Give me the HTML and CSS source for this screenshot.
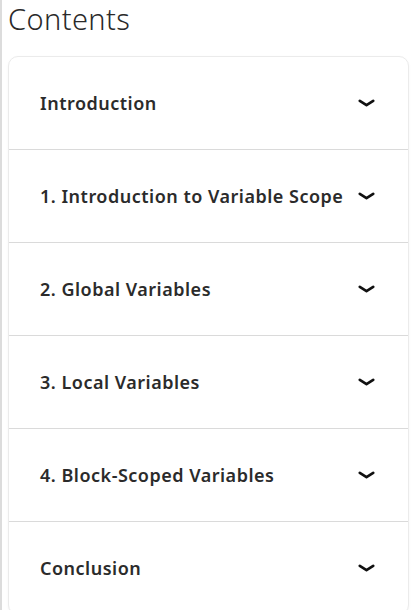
FILE: index.html
```html
<!DOCTYPE html>
<html lang="en">
<head>
<meta charset="utf-8">
<title>Contents</title>
<link rel="stylesheet" href="styles.css">
</head>
<body>
<div class="page">
  <h2 class="title">Contents</h2>
  <div class="toc">
    <div class="row"><span class="label">Introduction</span><svg class="chev" viewBox="0 0 17 10"><path d="M1.8 2.8 L8.5 7.2 L15.2 2.8"/></svg></div>
    <div class="row"><span class="label">1. Introduction to Variable Scope</span><svg class="chev" viewBox="0 0 17 10"><path d="M1.8 2.8 L8.5 7.2 L15.2 2.8"/></svg></div>
    <div class="row"><span class="label">2. Global Variables</span><svg class="chev" viewBox="0 0 17 10"><path d="M1.8 2.8 L8.5 7.2 L15.2 2.8"/></svg></div>
    <div class="row"><span class="label">3. Local Variables</span><svg class="chev" viewBox="0 0 17 10"><path d="M1.8 2.8 L8.5 7.2 L15.2 2.8"/></svg></div>
    <div class="row"><span class="label">4. Block-Scoped Variables</span><svg class="chev" viewBox="0 0 17 10"><path d="M1.8 2.8 L8.5 7.2 L15.2 2.8"/></svg></div>
    <div class="row"><span class="label">Conclusion</span><svg class="chev" viewBox="0 0 17 10"><path d="M1.8 2.8 L8.5 7.2 L15.2 2.8"/></svg></div>
  </div>
</div>
</body>
</html>
```

FILE: styles.css
```css
html, body {
  margin: 0;
  padding: 0;
  background: #fff;
}
body {
  font-family: "Noto Sans", "Open Sans", sans-serif;
  color: #222;
}
.page {
  border-left: 2px solid #dcdcdc;
  padding: 0 2px 0 6px;
  min-height: 610px;
  box-sizing: border-box;
}
.title {
  margin: 0;
  padding-top: 2px;
  height: 54px;
  font-size: 29px;
  font-weight: 300;
  line-height: 34px;
  letter-spacing: 0.4px;
  color: #2a2a2a;
}
.toc {
  border: 1px solid #ebebeb;
  border-radius: 10px;
  background: #fff;
  box-shadow: 0 1px 3px rgba(0,0,0,0.04);
}
.row {
  display: flex;
  align-items: center;
  justify-content: space-between;
  height: 92px;
  padding: 0 33px 0 31px;
  border-bottom: 1px solid #dadada;
}
.row:last-child {
  border-bottom: none;
}
.label {
  font-size: 18px;
  font-weight: 600;
  letter-spacing: 0.5px;
  color: #2b2b2b;
}
.chev {
  width: 17px;
  height: 10px;
  flex: none;
}
.chev path {
  fill: none;
  stroke: #111;
  stroke-width: 2.6;
  stroke-linecap: round;
  stroke-linejoin: round;
}
```
